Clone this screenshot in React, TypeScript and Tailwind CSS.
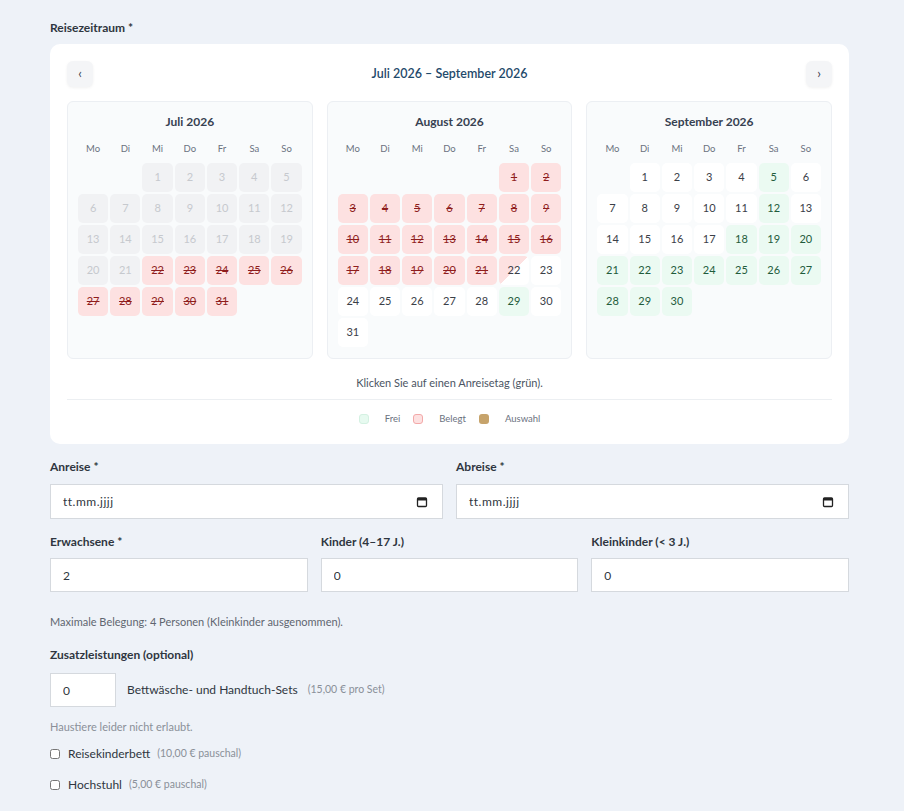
import React from 'react'

type DayState = 'past' | 'booked' | 'half' | 'free' | 'open'

interface MonthData {
  title: string
  offset: number
  days: number
  state: (d: number) => DayState
}

const MONTHS: MonthData[] = [
  {
    title: 'Juli 2026',
    offset: 2,
    days: 31,
    state: (d) => (d < 22 ? 'past' : 'booked'),
  },
  {
    title: 'August 2026',
    offset: 5,
    days: 31,
    state: (d) => (d < 22 ? 'booked' : d === 22 ? 'half' : d === 29 ? 'free' : 'open'),
  },
  {
    title: 'September 2026',
    offset: 1,
    days: 30,
    state: (d) => (d === 5 || d === 12 || d >= 18 ? 'free' : 'open'),
  },
]

const WEEKDAYS = ['Mo', 'Di', 'Mi', 'Do', 'Fr', 'Sa', 'So']

const cellClass: Record<DayState, string> = {
  past: 'bg-[#f1f2f4] text-[#c6c9ce]',
  booked: 'bg-[#fde1e1] text-[#8f1d1d] line-through',
  half: 'bg-[linear-gradient(135deg,#fde1e1_50%,#ffffff_50%)] text-[#3b4048]',
  free: 'bg-[#ebfaf2] text-[#1f5c3c]',
  open: 'bg-white text-[#3b4048]',
}

function MonthPanel({ month }: { month: MonthData }) {
  const cells: (number | null)[] = []
  for (let i = 0; i < month.offset; i++) cells.push(null)
  for (let d = 1; d <= month.days; d++) cells.push(d)

  return (
    <div className="rounded-md border border-[#eceff3] bg-[#f9fbfc] px-[10px] pt-[12px] pb-[11px]">
      <div className="text-center text-[12px] font-bold leading-[16px] text-[#374151]">{month.title}</div>
      <div className="mt-[12px] grid grid-cols-7 gap-x-[2px]">
        {WEEKDAYS.map((w) => (
          <div key={w} className="text-center text-[9.5px] leading-[14px] text-[#6b7280]">
            {w}
          </div>
        ))}
      </div>
      <div className="mt-[7px] grid grid-cols-7 gap-[2px] auto-rows-[29px]">
        {cells.map((d, i) =>
          d === null ? (
            <div key={'e' + i} />
          ) : (
            <div
              key={d}
              className={`flex items-center justify-center rounded-[5px] text-[11px] ${cellClass[month.state(d)]}`}
            >
              {d}
            </div>
          )
        )}
      </div>
    </div>
  )
}

function Label({ children }: { children: React.ReactNode }) {
  return <div className="text-[12px] font-bold leading-[16px] text-[#2f3640]">{children}</div>
}

function DateField({ label }: { label: string }) {
  return (
    <div className="flex flex-col gap-[9px]">
      <Label>{label}</Label>
      <div className="flex h-[35px] items-center justify-between border border-[#d5d9de] bg-white pl-[12px] pr-[14px]">
        <span className="text-[12px] tracking-[0.5px] text-[#2f3640]">tt.mm.jjjj</span>
        <svg width="12" height="12" viewBox="0 0 12 12" fill="none">
          <rect x="1.5" y="2" width="9" height="8.5" rx="1" stroke="#222" strokeWidth="1.3" />
          <rect x="1.5" y="2" width="9" height="2.5" fill="#222" />
        </svg>
      </div>
    </div>
  )
}

function NumberField({ label, value }: { label: string; value: string }) {
  return (
    <div className="flex flex-col gap-[8px]">
      <Label>{label}</Label>
      <input
        readOnly
        value={value}
        className="h-[34px] border border-[#d5d9de] bg-white px-[12px] text-[12px] text-[#2f3640] outline-none"
      />
    </div>
  )
}

export default function App() {
  return (
    <div
      className="min-h-[811px] w-full bg-[#eef2f8] px-[50px] pt-[20px] pb-[20px]"
      style={{ fontFamily: 'Lato, "Noto Sans", sans-serif' }}
    >
      <div className="w-[799px]">
        <Label>Reisezeitraum *</Label>

        {/* Calendar card */}
        <div className="mt-[8px] rounded-[10px] bg-white px-[17px] pt-[17px] pb-[18px]">
          <div className="flex items-center justify-between">
            <button className="flex h-[26px] w-[26px] items-center justify-center rounded-md bg-[#f4f5f7] text-[13px] text-[#374151] shadow-[0_1px_3px_rgba(0,0,0,0.06)]">
              ‹
            </button>
            <div className="text-[12.5px] font-semibold text-[#1f4a6b]">Juli 2026 – September 2026</div>
            <button className="flex h-[26px] w-[26px] items-center justify-center rounded-md bg-[#f4f5f7] text-[13px] text-[#374151] shadow-[0_1px_3px_rgba(0,0,0,0.06)]">
              ›
            </button>
          </div>

          <div className="mt-[14px] grid grid-cols-3 gap-[14px]">
            {MONTHS.map((m) => (
              <MonthPanel key={m.title} month={m} />
            ))}
          </div>

          <div className="mt-[16px] text-center text-[11px] leading-[16px] text-[#4b5563]">
            Klicken Sie auf einen Anreisetag (grün).
          </div>
          <div className="mt-[8px] border-t border-[#eceff2]" />
          <div className="mt-[12px] flex items-center justify-center gap-[13px] text-[9.5px] text-[#6b7280]">
            <div className="flex items-center gap-[16px]">
              <span className="h-[10px] w-[10px] rounded-[3px] border border-[#d4f1e2] bg-[#e7faf0]" />
              <span>Frei</span>
            </div>
            <div className="flex items-center gap-[16px]">
              <span className="h-[10px] w-[10px] rounded-[3px] border border-[#f3a9a9] bg-[#fde1e1]" />
              <span>Belegt</span>
            </div>
            <div className="flex items-center gap-[16px]">
              <span className="h-[10px] w-[10px] rounded-[3px] bg-[#c6a36b]" />
              <span>Auswahl</span>
            </div>
          </div>
        </div>

        {/* Dates */}
        <div className="mt-[15px] grid grid-cols-2 gap-[13px]">
          <DateField label="Anreise *" />
          <DateField label="Abreise *" />
        </div>

        {/* Guests */}
        <div className="mt-[15px] grid grid-cols-3 gap-[13px]">
          <NumberField label="Erwachsene *" value="2" />
          <NumberField label="Kinder (4–17 J.)" value="0" />
          <NumberField label="Kleinkinder (< 3 J.)" value="0" />
        </div>

        <div className="mt-[22px] text-[11px] leading-[16px] text-[#5f6670]">
          Maximale Belegung: 4 Personen (Kleinkinder ausgenommen).
        </div>

        <div className="mt-[17px]">
          <Label>Zusatzleistungen (optional)</Label>
        </div>

        <div className="mt-[10px] flex items-center">
          <input
            readOnly
            value="0"
            className="h-[34px] w-[66px] border border-[#d5d9de] bg-white px-[12px] text-[12px] text-[#2f3640] outline-none"
          />
          <span className="ml-[11px] text-[12px] text-[#2f3640]">Bettwäsche- und Handtuch-Sets</span>
          <span className="ml-[10px] text-[10.5px] text-[#8a9099]">(15,00 € pro Set)</span>
        </div>

        <div className="mt-[12px] text-[11px] leading-[16px] text-[#8a9099]">Haustiere leider nicht erlaubt.</div>

        <label className="mt-[10px] flex items-center">
          <input type="checkbox" className="h-[10px] w-[10px]" />
          <span className="ml-[8px] text-[12px] text-[#2f3640]">Reisekinderbett</span>
          <span className="ml-[7px] text-[10.5px] text-[#8a9099]">(10,00 € pauschal)</span>
        </label>
        <label className="mt-[13px] flex items-center">
          <input type="checkbox" className="h-[10px] w-[10px]" />
          <span className="ml-[8px] text-[12px] text-[#2f3640]">Hochstuhl</span>
          <span className="ml-[7px] text-[10.5px] text-[#8a9099]">(5,00 € pauschal)</span>
        </label>
      </div>
    </div>
  )
}
